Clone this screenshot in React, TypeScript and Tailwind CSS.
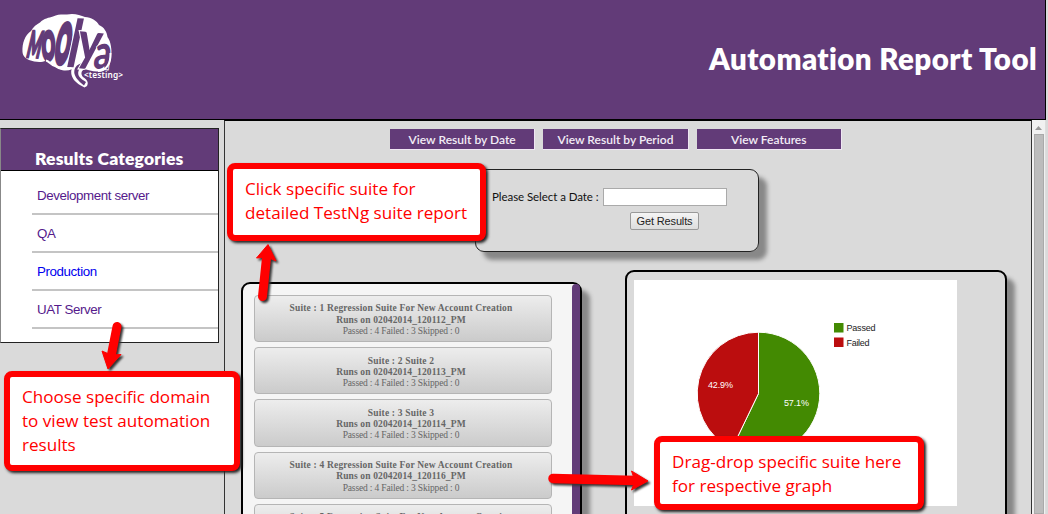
import React from "react";

const categories = [
  { name: "Development server", color: "text-[#551a8b]" },
  { name: "QA", color: "text-[#551a8b]" },
  { name: "Production", color: "text-[#0000ee]" },
  { name: "UAT Server", color: "text-[#551a8b]" },
];

const tabs = ["View Result by Date", "View Result by Period", "View Features"];

const suites = [
  { title: "Suite : 1 Regression Suite For New Account Creation", run: "02042014_120112_PM" },
  { title: "Suite : 2 Suite 2", run: "02042014_120113_PM" },
  { title: "Suite : 3 Suite 3", run: "02042014_120114_PM" },
  { title: "Suite : 4 Regression Suite For New Account Creation", run: "02042014_120116_PM" },
  { title: "Suite : 5 Regression Suite For New Account Creation", run: "02042014_120117_PM" },
];

function Logo() {
  return (
    <svg className="ml-[18px] mt-[10px] block overflow-visible" width="110" height="82" viewBox="18 10 110 82">
      <path
        d="M22.5 52C22 43 25 35 31 31C33 27 37 24 40 22.500C44 18 49 18 53 16.500C58 14 63 14.500 67 14.500C74 13 80 15 85 17C91 17 97 21 99 25C104 27 107 32 107.500 37C111 42 112 49 111 57C110 65 106 71 99 71.500C93 72 88 70 84.500 69C81 71 80.500 74 83 77C87 80 89 82 87 86L84.500 87.500L79 84.500C74 81 70 76 71.500 69C66 71 59 70 55 66C51 65 49 61 46 60.500C41 63 35 62 29 60C25 58 23 56 22.500 52Z"
        fill="#fff"
      />
      <path d="M83 63C76 64 73.500 69 74.500 74C76 79 80 82 84 85.500L86 82C81 79 77 76 78.500 71C79.500 68 83 67 83 63Z" fill="#623b78" />
      <g fill="#623b78" stroke="#623b78" strokeWidth="1.200" fontFamily="Lato, sans-serif" fontWeight="900">
        <text transform="translate(25.500 57) rotate(3) skewX(-10) scale(.58 1.450)" fontSize="25" strokeWidth="1.800">M</text>
        <text transform="translate(42 60) rotate(-3) skewX(-3) scale(.64 1.520)" fontSize="25" strokeWidth="3">O</text>
        <text transform="translate(53 62.500) rotate(2) skewX(-8) scale(.72 2.120)" fontSize="25" strokeWidth="3">O</text>
        <g stroke="#fff" strokeWidth="1.400" paintOrder="stroke">
          <text transform="translate(64.500 67) rotate(2) skewX(-10) scale(1.400 2)" fontSize="33">l</text>
          <text transform="translate(75.500 59) rotate(5) skewX(-4) scale(1.450 1.750)" fontSize="31">y</text>
          <text transform="translate(92.500 68) rotate(5) skewX(-3) scale(1.050 1.500)" fontSize="32">a</text>
        </g>
      </g>
      <path d="M71.500 68C66 71 59 69 55 66C51 65 49 61 46 60.500M110.500 53C111 64 106 71 98 71" fill="none" stroke="#fff" strokeWidth="2" />
      <text x="84" y="78" fill="#fff" fontFamily="'Noto Sans', sans-serif" fontWeight="600" fontSize="8.300" textLength="39">&lt;testing&gt;</text>
    </svg>
  );
}

function Header() {
  return (
    <header className="flex h-[120px] w-[1046px] shrink-0 items-start justify-between border-r border-b border-black bg-[#623b78]">
      <Logo />
      <h1 className="mr-[8px] mt-[41px] font-[Lato] text-[29.500px] leading-[36px] font-extrabold tracking-[0.400px] whitespace-nowrap text-white">
        Automation Report Tool
      </h1>
    </header>
  );
}

function Sidebar() {
  return (
    <aside className="mt-[8px] h-[215px] w-[219px] shrink-0 border border-[#222] border-l-[#888] bg-white">
      <h2 className="flex h-[42px] items-end border-b border-black bg-[#623b78] pl-[34px] font-[Lato] text-[17.500px] leading-[23px] font-extrabold tracking-[0.160px] whitespace-nowrap text-white">
        Results Categories
      </h2>
      <ul className="ml-[31px] pt-[6px] font-['Liberation_Sans'] text-[13.330px] tracking-[-0.400px]">
        {categories.map((c) => (
          <li key={c.name} className={`flex h-[38px] items-center border-b-2 border-[#c4c4c4] pt-[2px] pl-[5px] ${c.color}`}>
            {c.name}
          </li>
        ))}
      </ul>
    </aside>
  );
}

function DateForm() {
  return (
    <form className="mt-[19px] ml-[250px] flex h-[83px] w-[284px] shrink-0 flex-col rounded-[9px] border border-[#222] pt-[17px] shadow-[8px_8px_4px_#888]">
      <label className="flex h-[19px] items-center pl-[16px] font-[Lato] text-[11.500px] tracking-[-0.060px] whitespace-nowrap text-[#111]">
        <span className="w-[111px]">Please Select a Date :</span>
        <input className="h-[18px] w-[124px] border border-[#aaa] bg-white" />
      </label>
      <button type="button" className="mt-[6px] ml-[154px] h-[18px] w-[69px] rounded-[2px] border border-[#999] bg-linear-to-b from-[#f5f5f5] to-[#ddd] font-['Liberation_Sans'] text-[11px] leading-[16px] tracking-[-0.150px] whitespace-nowrap text-[#222]">
        Get Results
      </button>
    </form>
  );
}

function SuitePanel() {
  return (
    <section className="flex h-[300px] w-[341px] justify-between rounded-t-[9px] border-2 border-black bg-[#f5f5f5] shadow-[8px_8px_4px_#888]">
      <div className="ml-[11px] flex flex-col gap-[5px] pt-[11px]">
        {suites.map((s) => (
          <article
            key={s.run}
            className="h-[47.200px] w-[298px] shrink-0 rounded-[4px] border border-[#b5b5b5] bg-linear-to-b from-[#ededed] to-[#cbcbcb] pt-[7.400px] pr-[4px] text-center font-['Liberation_Serif'] text-[9.500px] leading-[11.300px] whitespace-nowrap text-[#666]"
          >
            <p className="font-bold tracking-[0.180px]">{s.title}</p>
            <p className="font-bold tracking-[0.130px]">Runs on {s.run}</p>
            <p className="tracking-[-0.160px]">Passed : 4 Failed : 3 Skipped : 0</p>
          </article>
        ))}
      </div>
      <div className="w-[8px] rounded-t-[4px] bg-[#623b78]" />
    </section>
  );
}

function PieChart() {
  return (
    <svg className="block bg-white" width="323" height="226" viewBox="634 280 323 226">
      <g stroke="#fff" strokeWidth="1">
        <path d="M758.500 393.500V332.200A61.300 61.300 0 1 1 731.900 448.730Z" fill="#438a02" />
        <path d="M758.500 393.500L731.900 448.730A61.300 61.300 0 0 1 758.500 332.200Z" fill="#bb0d0e" />
      </g>
      <g fontFamily="'Liberation Sans', Arial, sans-serif" fontSize="9">
        <text x="708" y="388" fill="#fff" textLength="25">42.9%</text>
        <text x="784" y="406" fill="#fff" textLength="25">57.1%</text>
        <rect x="834" y="323" width="9.500" height="9.500" fill="#438a02" />
        <rect x="834" y="337.500" width="9.500" height="9.500" fill="#bb0d0e" />
        <text x="846.500" y="331" fill="#222" textLength="29">Passed</text>
        <text x="846.500" y="345.500" fill="#222" textLength="23">Failed</text>
      </g>
    </svg>
  );
}

function Note({ place, lines }: { place: string; lines: string[] }) {
  return (
    <div className={`absolute rounded-[8px] border-[6px] border-[#f00] bg-white pl-[12px] pt-[8px] font-['Open_Sans'] leading-[24px] whitespace-nowrap text-[#f00] shadow-[2px_2px_3px_#222] ${place}`}>
      {lines.map((line) => (
        <p key={line}>{line}</p>
      ))}
    </div>
  );
}

function Arrows() {
  return (
    <svg className="pointer-events-none absolute inset-0 drop-shadow-[2px_2px_1px_#333]" width="1048" height="514">
      <g fill="#f00" stroke="#f00" strokeLinejoin="round">
        <path d="M262.500 296.500L266.500 258" strokeWidth="9" strokeLinecap="round" />
        <path d="M268 244.500L276 261L267 257L256.500 258Z" strokeWidth="1" />
        <path d="M117 326.500L111 357" strokeWidth="9" strokeLinecap="round" />
        <path d="M108 369L102 351L111 355L121 354.500Z" strokeWidth="1" />
        <path d="M553 478.500L635 480.500" strokeWidth="9.500" strokeLinecap="round" />
        <path d="M648 481L631.500 471L635 481L631.500 490Z" strokeWidth="1" />
      </g>
    </svg>
  );
}

export default function App() {
  return (
    <div className="relative flex h-[514px] w-[1048px] flex-col overflow-hidden bg-[#dadada]">
      <Header />
      <div className="flex min-h-0 flex-1 gap-[5px]">
        <Sidebar />
        <main className="flex h-[394px] w-[808px] shrink-0 flex-col overflow-hidden border-x border-t border-x-[#333] border-t-black">
          <nav className="mt-[8px] ml-[165px] flex shrink-0 gap-[8px]">
            {tabs.map((t) => (
              <button key={t} type="button" className="h-[21px] w-[145.300px] border-r border-b border-[#efe6f3] bg-[#623b78] pt-[1px] font-[Lato] text-[12px] leading-[20px] font-semibold tracking-[0.020px] whitespace-nowrap text-[#f3edf6]">
                {t}
              </button>
            ))}
          </nav>
          <DateForm />
          <div className="mt-[18px] ml-[16px] flex shrink-0 items-start gap-[43px]">
            <div className="pt-[12px]">
              <SuitePanel />
            </div>
            <section className="h-[300px] w-[382px] rounded-[9px] border-2 border-black pt-[8px] pl-[7px] shadow-[8px_8px_4px_#888]">
              <PieChart />
            </section>
          </div>
        </main>
        <div className="-ml-[5px] flex w-[14px] shrink-0 flex-col items-center border-r border-[#ddd] bg-[#f1f1f1] pt-[6px]">
          <svg width="7" height="4" viewBox="0 0 7 4" className="shrink-0">
            <path d="M0 4L3.500 0L7 4Z" fill="#999" />
          </svg>
          <div className="mt-[4px] w-[10px] flex-1 border border-[#aaa] bg-[#bcbcbc]" />
        </div>
      </div>
      <Note place="left-[227px] top-[163px] h-[78px] w-[259px] text-[17.100px]" lines={["Click specific suite for", "detailed TestNg suite report"]} />
      <Note place="left-[4px] top-[371px] h-[100px] w-[236px] text-[17.100px]" lines={["Choose specific domain", "to view test automation", "results"]} />
      <Note place="left-[654px] top-[436px] h-[74px] w-[270px] text-[17.100px]" lines={["Drag-drop specific suite here", "for respective graph"]} />
      <Arrows />
    </div>
  );
}
